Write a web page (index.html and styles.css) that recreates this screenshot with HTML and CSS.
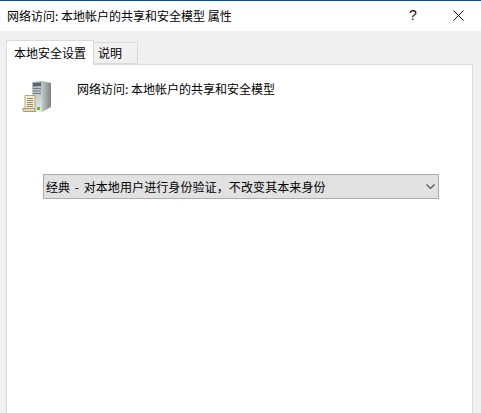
FILE: index.html
```html
<!DOCTYPE html>
<html lang="zh-CN">
<head>
<meta charset="utf-8">
<title>属性</title>
<link rel="stylesheet" href="styles.css">
</head>
<body>
<div class="dialog">
  <header class="titlebar">
    <span class="title">网络访问: 本地帐户的共享和安全模型 属性</span>
    <span class="help">?</span>
    <svg class="close" width="11" height="11" viewBox="0 0 11 11"><path d="M0.5 0.5L10.5 10.5M10.5 0.5L0.5 10.5" stroke="#111" stroke-width="1" fill="none"/></svg>
  </header>
  <main class="content">
    <div class="tabs">
      <div class="tab active">本地安全设置</div>
      <div class="tab">说明</div>
    </div>
    <section class="panel">
      <div class="policy">
        <svg class="policy-icon" width="36" height="34" viewBox="0 0 36 34">
          <defs>
            <linearGradient id="front" x1="0" y1="0" x2="0" y2="1">
              <stop offset="0" stop-color="#aeb6bb"/>
              <stop offset="1" stop-color="#e4e7e8"/>
            </linearGradient>
            <linearGradient id="side" x1="0" y1="0" x2="1" y2="0">
              <stop offset="0" stop-color="#c2c6c6"/>
              <stop offset="1" stop-color="#7d8384"/>
            </linearGradient>
          </defs>
          <path d="M13 2L23 1V32L13 29Z" fill="url(#front)"/>
          <path d="M23 1L32 3V27L23 32Z" fill="url(#side)"/>
          <path d="M14 3L22 2.500V6L14 6.500Z" fill="#59666f"/>
          <path d="M14 8H22V9H14ZM14 10.500H22V11.500H14ZM14 13H22V14H14Z" fill="#6d7a84"/>
          <rect x="18" y="27" width="3" height="3" fill="#58c03c"/>
          <path d="M6 15.500H16V29H6Z" fill="#f5eccb" stroke="#b0a682"/>
          <path d="M3.500 28.500H15L17 31.500H4.500Z" fill="#e6d8a8" stroke="#a89c78"/>
          <path d="M8 18.500H14M8 20.500H14M8 22.500H14M8 24.500H14M8 26.500H14" stroke="#8f8a78"/>
        </svg>
        <p class="policy-name">网络访问: 本地帐户的共享和安全模型</p>
      </div>
      <div class="select">
        <span class="select-value">经典 - 对本地用户进行身份验证，不改变其本来身份</span>
        <svg class="chevron" width="9" height="6" viewBox="0 0 9 6"><path d="M0.500 0.500L4.500 4.500L8.500 0.500" stroke="#555" stroke-width="1.200" fill="none"/></svg>
      </div>
    </section>
  </main>
</div>
</body>
</html>
```
FILE: styles.css
```css
html, body {
  margin: 0;
  padding: 0;
  height: 100%;
  overflow: hidden;
}
body {
  font-family: "Noto Sans CJK SC", "Liberation Sans", sans-serif;
  font-size: 12px;
  color: #000;
  background: #f0f0f0;
}
.dialog {
  display: flex;
  flex-direction: column;
  height: 413px;
}
.titlebar {
  display: flex;
  align-items: center;
  height: 30px;
  flex: none;
  background: #fff;
  border-top: 1px solid #1b4a70;
  padding-left: 7px;
  line-height: 16px;
}
.title {
  flex: 1;
  white-space: nowrap;
}
.help {
  font-family: "Liberation Sans", sans-serif;
  font-size: 14px;
  width: 10px;
  margin-right: 34px;
  margin-top: -2px;
  color: #111;
}
.close {
  margin-right: 17px;
  margin-top: -2px;
}
.content {
  flex: 1;
  padding: 9px 8px 0 6px;
  min-height: 0;
}
.tabs {
  display: flex;
  align-items: flex-end;
  height: 24px;
  position: relative;
  z-index: 1;
}
.tab {
  box-sizing: border-box;
  height: 22px;
  width: 44px;
  padding: 0 4px;
  line-height: 20px;
  background: #f0f0f0;
  border: 1px solid #d9d9d9;
  border-left: 0;
}
.tab.active {
  height: 25px;
  margin-bottom: -1px;
  width: 88px;
  padding: 2px 7px 0;
  background: #fff;
  border-left: 1px solid #d9d9d9;
  border-bottom: 0;
  white-space: nowrap;
}
.panel {
  box-sizing: border-box;
  height: 360px;
  background: #fff;
  border: 1px solid #d9d9d9;
}
.policy {
  display: flex;
  padding: 15px 0 0 12px;
  height: 109px;
  box-sizing: border-box;
}
.policy-icon {
  flex: none;
}
.policy-name {
  margin: 1px 0 0 22px;
  line-height: 16px;
}
.select {
  box-sizing: border-box;
  display: flex;
  align-items: center;
  justify-content: space-between;
  margin-left: 36px;
  width: 396px;
  height: 25px;
  padding: 0 3px 0 2px;
  background: #e1e1e1;
  border: 1px solid #adadad;
}
.select-value {
  word-spacing: 1.8px;
  letter-spacing: 0.1px;
}
```
